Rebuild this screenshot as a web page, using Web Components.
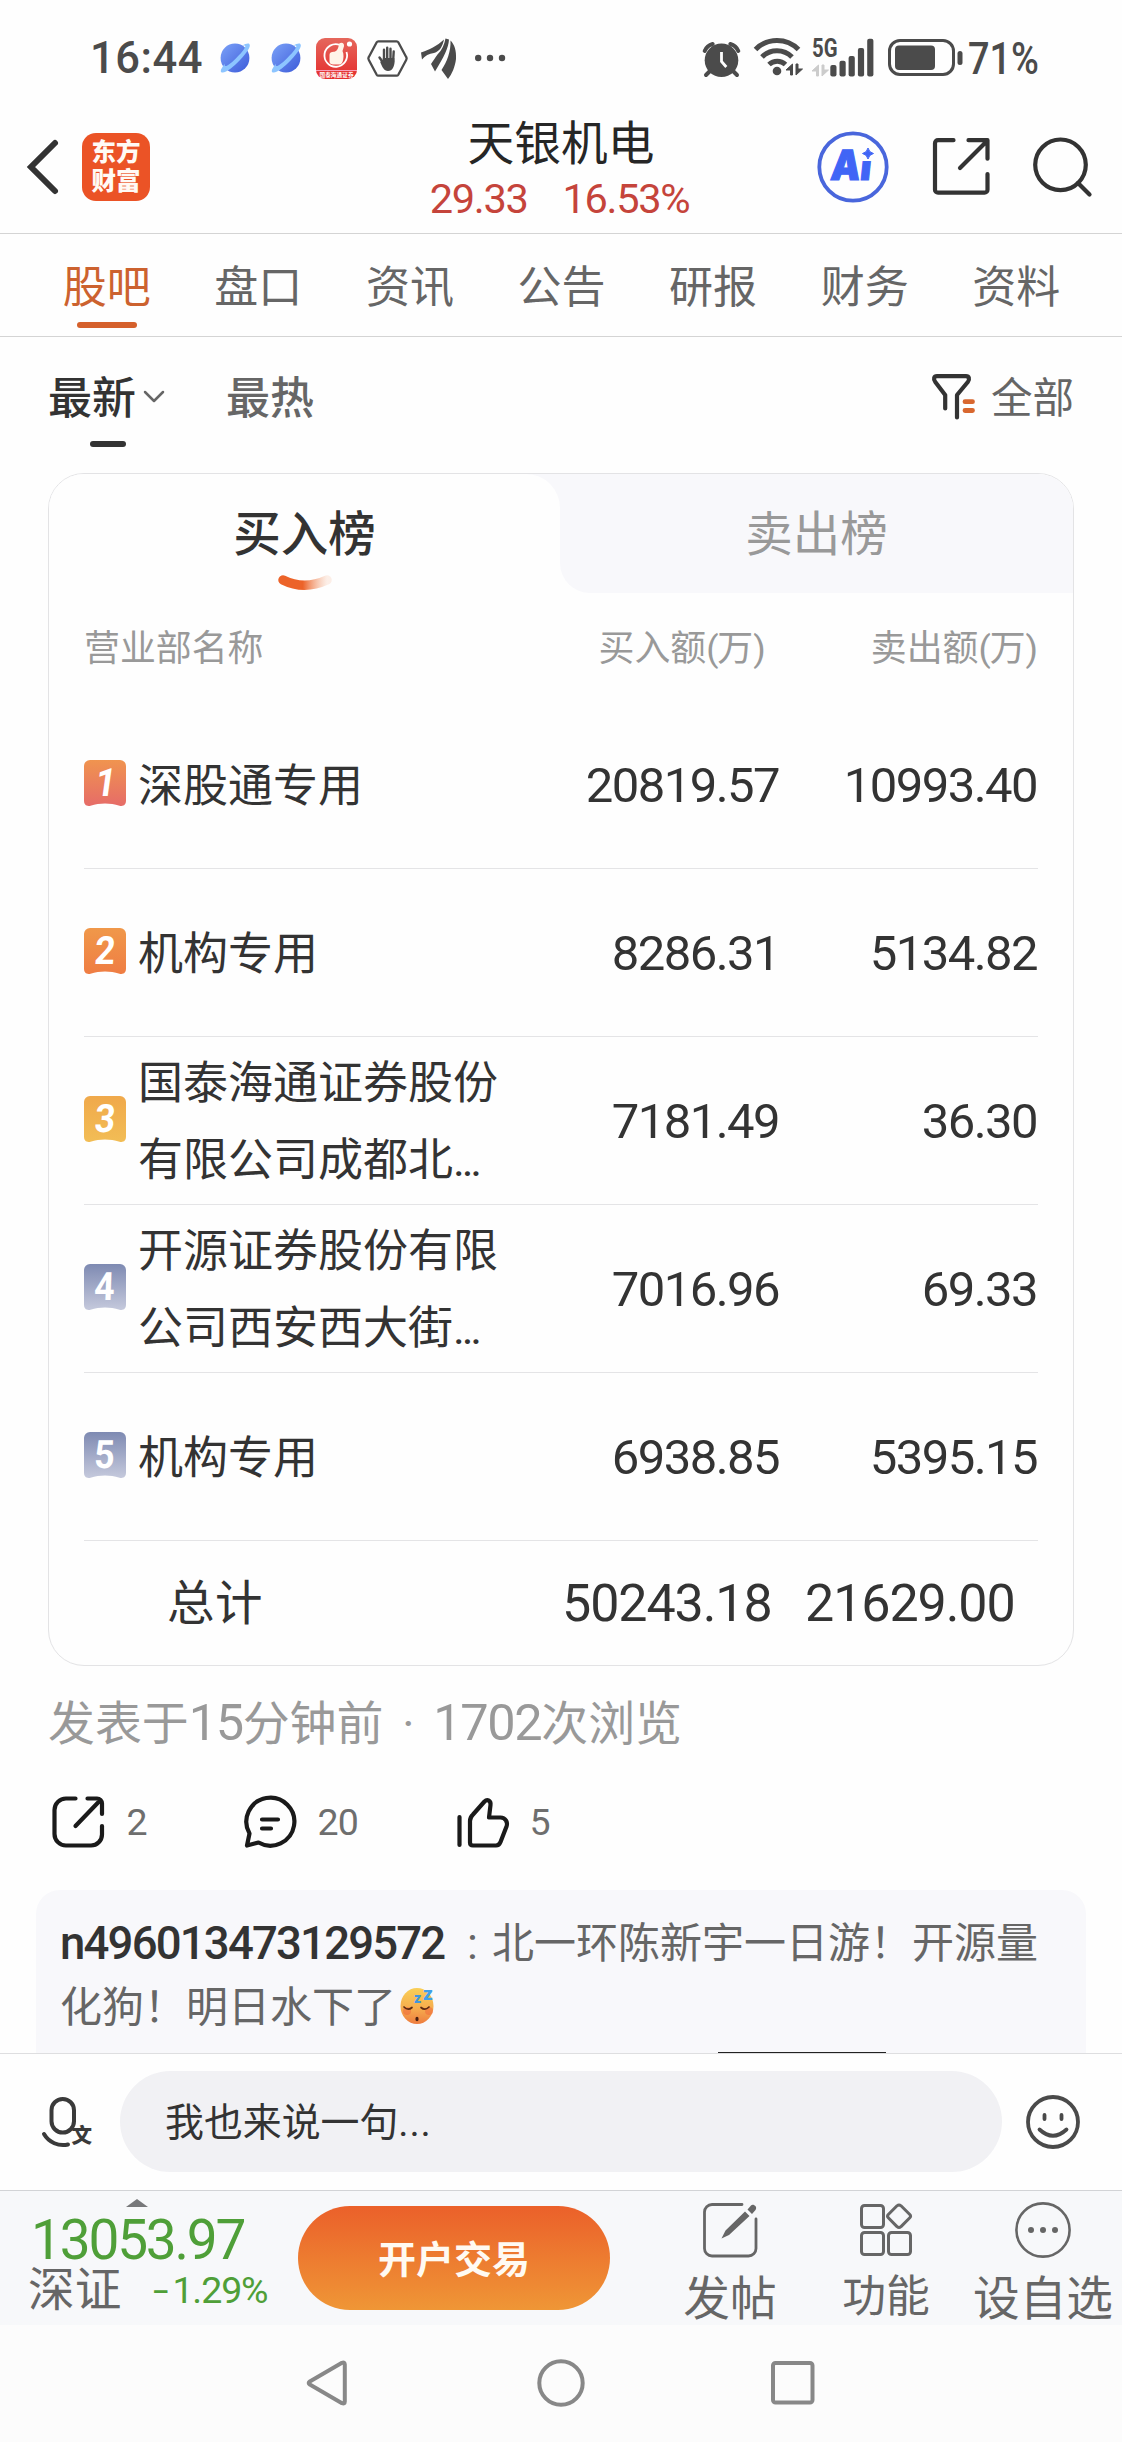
<!DOCTYPE html>
<html lang="zh-CN">
<head>
<meta charset="utf-8">
<title>天银机电</title>
<style>
html,body{margin:0;padding:0}
body{width:1122px;height:2442px;overflow:hidden;background:#fefefe;color:#333;font-family:Roboto,"Noto Sans CJK SC",sans-serif}
</style>
</head>
<body>
<stock-page></stock-page>
<script>
const BASE = `*{box-sizing:border-box}svg{display:block;flex:none;overflow:visible}span,div{white-space:nowrap}`;
function element(name, css, html) {
  customElements.define(name, class extends HTMLElement {
    connectedCallback() {
      if (this.shadowRoot) return;
      const root = this.attachShadow({ mode: 'open' });
      const t = document.createElement('template');
      const body = typeof html === 'function' ? html(this) : html;
      t.innerHTML = `<style>${BASE}${css}</style>${body}`;
      root.appendChild(t.content.cloneNode(true));
    }
  });
}

const planet = id => `<svg width="30" height="30" viewBox="0 0 30 30"><defs><linearGradient id="${id}" x1="0" y1="0" x2="1" y2="1"><stop offset="0" stop-color="#7ba2f8"/><stop offset="1" stop-color="#3d5bd9"/></linearGradient></defs><circle cx="15" cy="15" r="14.4" fill="url(#${id})"/><path d="M5 20.500C1.500 25 0 28 1.300 29.200c3 2 12-5 18.500-12C27 9.500 31.500 2.800 29.300.9 28.200 0 25.500.7 22 2.700c2.500-.6 3.500-.2 3.300.8-.5 2.500-5 7.500-9.500 12S6.500 23.700 5.200 23c-.7-.4-.7-1.300-.2-2.500z" fill="#8dc5ff"/></svg>`;

/* Status bar */
element('status-bar', `:host{display:flex;height:116px;color:#4b4b4b;padding-left:90px}
.time{font-size:43.500px;font-weight:500;line-height:44px;letter-spacing:.5px;width:130px;margin-top:37px}`,
`<span class="time">16:44</span>
<div style="margin-top:43px">${planet('p1')}</div>
<div style="margin:43px 0 0 21px">${planet('p2')}</div>
<svg style="margin:38px 0 0 15px" width="41" height="41" viewBox="0 0 41 41"><defs><linearGradient id="r" x1="0" y1="0" x2="0" y2="1"><stop offset="0" stop-color="#e5675c"/><stop offset="1" stop-color="#e52c2c"/></linearGradient></defs><rect width="41" height="41" rx="9" fill="url(#r)"/><path d="M0 32.500h41" stroke="#fbd" stroke-width=".8"/><path d="M24 7a11.300 11.300 0 1 0 6.500 7" fill="none" stroke="#fff" stroke-width="1.800"/><path d="M13.500 17c0-2.500 2-3.500 5-3.300 3-1 4-4 4.500-8 2.500-2 5.500-1 5 2.500L26.500 13c1.500 3 1.200 8 0 11-.8 2-2 2.500-3.500 2.500h-6c-2 0-3.500-1-3.500-3z" fill="#fff4e8"/><circle cx="33.500" cy="6" r="2.600" fill="#fff"/><text x="3.500" y="38.500" font-size="5.600" font-weight="700" fill="#fff" textLength="34">国泰海通证券</text></svg>
<svg style="margin:40px 0 0 10px" width="41" height="37" viewBox="0 0 41 37"><path d="M11.500 1.300h18a2 2 0 0 1 1.800 1l8 14.900a2.500 2.500 0 0 1 0 2.500l-8 15a2 2 0 0 1-1.800 1h-18a2 2 0 0 1-1.800-1l-8-15a2.500 2.500 0 0 1 0-2.500l8-14.900a2 2 0 0 1 1.800-1z" fill="none" stroke="#4b4b4b" stroke-width="2.300"/><path d="M17 9.800V20M20.200 7.800V20M23.500 8.800V20M26.700 11.500l-.6 10M12.500 17.500l3.500 5" stroke="#4b4b4b" stroke-width="2.400" stroke-linecap="round"/><path d="M15.800 18h11.500l.3 4c-.3 4-1.800 9-6.600 9-4 0-5.800-4-8-9.500l3 .5z" fill="#4b4b4b"/></svg>
<svg style="margin:38px 0 0 13px" width="36" height="41" viewBox="0 0 36 41" fill="#4b4b4b"><path d="M0 14.500C8 12 16 8 23 1.500c-1.500 7-4 11.500-10 13.500-5 .8-9 2.500-12 6.500z"/><path d="M24.500 .5l3.500 1C27.500 10 23 19 14 33.500L10 26c2-3 4-6 6.500-9.500C21 12 23.500 6 24.500.5z"/><path d="M29.500 2.500c4 4 6 10 5.500 18.500-1 8-4 15-8 20l-6.500-9C26 24 30 13 29.500 2.500z"/></svg>
<svg style="margin:54px 0 0 18px" width="30" height="8" fill="#4b4b4b"><circle cx="3.200" cy="4" r="3.200"/><circle cx="15" cy="4" r="3.200"/><circle cx="27" cy="4" r="3.200"/></svg>
<svg style="margin:42px 0 0 198px" width="37" height="35" viewBox="0 0 37 35"><circle cx="18.500" cy="18.300" r="16.800" fill="#4b4b4b"/><path d="M1.700 9a12 12 0 0 1 8-7M35.300 9a12 12 0 0 0-8-7M7 29l-4 4M30 29l4 4" stroke="#4b4b4b" stroke-width="4" stroke-linecap="round" fill="none"/><path d="M18.500 10v9.500l4.800 5.500" stroke="#fefefe" stroke-width="2.800" fill="none"/></svg>
<svg style="margin:38px 0 0 14px" width="49" height="38" viewBox="0 0 49 38"><g fill="none" stroke="#4b4b4b" stroke-width="5"><path d="M1.500 11.500a30 30 0 0 1 43 0"/><path d="M8 19a21 21 0 0 1 30 0"/><path d="M15 26.500a12 12 0 0 1 16.500 0"/></g><circle cx="23" cy="33" r="4.300" fill="#4b4b4b"/><path d="M38.500 26v11h-2v-5h-4.500zM42 37V26h2v5h4.500z" fill="#4b4b4b" stroke="#4b4b4b" stroke-width="1"/></svg>
<svg style="margin:38px 0 0 9px" width="62" height="39" viewBox="0 0 62 39"><text x="0" y="19" font-size="25" font-weight="700" fill="#4b4b4b" textLength="25.500" lengthAdjust="spacingAndGlyphs">5G</text><path d="M6.500 27v11h-2v-5H0zM10 38V27h2v5h4.500z" fill="#ccc" stroke="#ccc"/><g fill="#4b4b4b"><rect x="18.300" y="27" width="6.200" height="11.500" rx="2"/><rect x="27.500" y="22.700" width="6.200" height="15.800" rx="2"/><rect x="36.600" y="18" width="6.200" height="20.500" rx="2"/><rect x="45.900" y="10" width="6.200" height="28.500" rx="2"/><rect x="55.200" y=".7" width="6.200" height="37.800" rx="2"/></g></svg>
<svg style="margin:39px 0 0 14px" width="75" height="37" viewBox="0 0 75 37"><rect x="1.500" y="1.500" width="64" height="34" rx="10.500" fill="none" stroke="#4b4b4b" stroke-width="3"/><rect x="7" y="6.500" width="40" height="24.500" rx="4" fill="#4b4b4b"/><rect x="69.500" y="12" width="5" height="14" rx="2.500" fill="#4b4b4b"/></svg>
<svg style="margin:38px 0 0 5px" width="72" height="40"><text x="0" y="35.500" font-size="43.500" font-weight="500" fill="#4b4b4b" textLength="71" lengthAdjust="spacingAndGlyphs">71%</text></svg>`);

/* Title header */
element('quote-header', `:host{display:flex;height:118px;border-bottom:1px solid #d4d4d4}
.side{display:flex;width:360px;height:101px;align-items:center;flex:none}
.l{padding-left:27px}.r{padding:0 30px 0 55px;justify-content:space-between}
.logo{width:68px;height:68px;border-radius:14px;background:#eb5326;color:#fffaf5;font-weight:900;font-size:24.500px;line-height:29px;text-align:center;padding-top:5px;margin:1px 0 0 24px}
.mid{width:402px;text-align:center}
.name{font-size:46.700px;line-height:50px;color:#262626;margin-top:3px}
.num{display:flex;justify-content:center;gap:35px;font-size:41.500px;line-height:44px;color:#c5443b;letter-spacing:-1.300px;margin:8px 3px 0 0}`,
`<div class="side l"><svg width="31" height="54" viewBox="0 0 31 54"><path d="M28 3L4 27l24 24" fill="none" stroke="#333" stroke-width="6" stroke-linecap="round"/></svg><div class="logo">东方<br>财富</div></div>
<div class="mid"><div class="name">天银机电</div><div class="num"><span>29.33</span><span>16.53%</span></div></div>
<div class="side r">
<svg width="72" height="72" viewBox="0 0 72 72"><circle cx="36" cy="36" r="33.700" fill="none" stroke="#4966dc" stroke-width="3.800"/><g transform="skewX(-6)"><text x="18" y="49.500" font-family="Inter" font-size="41.500" font-weight="900" fill="#4065f6" stroke="#4065f6" stroke-width="1.200" textLength="40.500" lengthAdjust="spacingAndGlyphs">Ai</text></g><path d="M43 14h16v16H43z" fill="#fefefe"/><path d="M51 17q1 4.500 5.500 5.500-4.500 1-5.500 5.500-1-4.500-5.500-5.500 4.500-1 5.500-5.500z" fill="#4065f6" stroke="#4065f6"/></svg>
<svg width="57" height="57" viewBox="0 0 57 57" fill="none" stroke="#333" stroke-width="4.200" stroke-linecap="round" stroke-linejoin="round"><path d="M20.500 2.200H5a3 3 0 0 0-3 3v46.500a3 3 0 0 0 3 3h46.500a3 3 0 0 0 3-3V36M35.500 2.200h19v18.500M54 3L27 30"/></svg>
<svg width="59" height="59" viewBox="0 0 59 59" fill="none" stroke="#333" stroke-width="4.200" stroke-linecap="round"><circle cx="27.500" cy="27.800" r="25.300"/><path d="M45 46l11.500 11.500"/></svg></div>`);

/* Section tabs */
element('tab-strip', `:host{display:flex;height:103px;padding:0 30px 0 31px;border-bottom:1px solid #d4d4d4}`, `<slot></slot>`);
element('tab-item', `:host{display:flex;flex-direction:column;align-items:center;flex:1;font-size:44px;color:#666}
:host([on]){color:#cc622f}
span{line-height:60px;margin-top:24px}
i{display:none;width:60px;height:6px;border-radius:3px;background:#d5602b;margin-top:4px}
:host([on]) i{display:block}`, `<span><slot></slot></span><i></i>`);

/* Sort and filter */
element('filter-row', `:host{display:flex;height:136px;padding:31px 48px 0 48px;font-size:44px;font-weight:500;line-height:62px}
.on{width:89px;display:flex;flex-direction:column;align-items:center}
.on span{align-self:flex-start}
.on i{width:36px;height:6px;border-radius:3px;background:#333;margin:11px 0 0 30px}
.hot{color:#666;margin-left:61px}
.all{margin-left:16px;color:#666;font-size:41.500px;font-weight:400}`,
`<div class="on"><span>最新</span><i></i></div>
<svg style="margin:21px 0 0 6px" width="22" height="14" fill="none" stroke="#666" stroke-width="2.500" stroke-linecap="round" stroke-linejoin="round"><path d="M2 3l9 9 9-9"/></svg>
<span class="hot">最热</span>
<svg style="margin:6px 0 0 auto" width="43" height="46" viewBox="0 0 43 46" fill="none" stroke-linecap="round" stroke-linejoin="round"><path d="M13.200 34.500V21L3.300 8C1 5 2 2.200 5 2.200h29c3 0 4 2.800 1.800 5.800L25 21v22.500" stroke="#333" stroke-width="4.200"/><path d="M33 27.700h7.500M33 36.500h7.500" stroke="#d8672f" stroke-width="4.800"/></svg>
<span class="all">全部</span>`);

/* Ranking card */
element('rank-card', `:host{display:block;margin:0 48px;height:1193px;border:1px solid #e3e3e5;border-radius:36px;overflow:hidden}
.head{display:flex;height:119px;line-height:122px;font-size:47.500px;text-align:center}
.a{width:511px;background:#f8f8fb}.b{flex:1;background:#fefefe}
.a>div{height:119px;background:#fefefe;border-top-right-radius:34px;display:flex;flex-direction:column;align-items:center;font-weight:500}
.a svg{margin-top:-21px}
.b>div{height:119px;background:#f8f8fb;border-bottom-left-radius:30px;color:#999}
.cols{display:flex;height:108px;padding:0 36px 0 35px;font-size:35.900px;line-height:113px;color:#999}
.cols span:nth-child(1){width:512px}
.p{font-weight:400;letter-spacing:-1.100px}
.rows{padding:0 35px}
.sum{display:flex;line-height:126px;padding-left:118px;font-size:52px;letter-spacing:-1.080px}
.sum span:first-child{font-size:47.500px;letter-spacing:.5px;width:395px}
.sum span:nth-child(2){width:243px}`,
`<div class="head"><div class="a"><div><span>买入榜</span><svg width="54" height="16" viewBox="0 0 54 16"><defs><linearGradient id="s"><stop offset=".45" stop-color="#ec6329"/><stop offset="1" stop-color="#f4b08c" stop-opacity=".2"/></linearGradient></defs><path d="M5 5q21 10.500 44 0" fill="none" stroke="url(#s)" stroke-width="9.500" stroke-linecap="round"/></svg></div></div><div class="b"><div>卖出榜</div></div></div>
<div class="cols"><span>营业部名称</span><span style="padding-left:2.500px">买入额<b class="p">(</b>万<b class="p">)</b></span><span style="margin-left:auto">卖出额<b class="p">(</b>万<b class="p">)</b></span></div>
<div class="rows"><slot></slot></div>
<div class="sum"><span>总计</span><span>50243.18</span><span>21629.00</span></div>`);

const TONES = { 1: ['#f0944f', '#e66c68'], 2: ['#f0984a', '#ef7d43'], 3: ['#f0a94b', '#f2bd55'], 4: ['#7e8ab2', '#c5c9dc'], 5: ['#7e8ab2', '#c5c9dc'] };
element('rank-row', `:host{display:flex;align-items:center;height:168px;border-bottom:1px solid #e4e4e6;font-size:45px}
.name{width:375px;line-height:77px;margin:3px 0 0 12px}
.name ::slotted(small){font-size:inherit;letter-spacing:-3.200px}
.v{font-size:49px;letter-spacing:-1.550px;line-height:60px;text-align:right;margin-top:2px}
.b{width:266px}.s{flex:1;padding-right:1px}`, el => {
  const n = el.getAttribute('rank'), [c1, c2] = TONES[n], k = n == 1 ? -8 : n < 4 ? -5 : -2;
  return `<svg width="42" height="46" viewBox="0 0 42 46" style="margin-top:-3px"><defs><linearGradient id="g" x1="0" y1="0" x2="0" y2="1"><stop offset="0" stop-color="${c1}"/><stop offset="1" stop-color="${c2}"/></linearGradient></defs><path d="M6 0h30a6 6 0 0 1 6 6v34.500c0 4.500-2.500 6-6.500 5.200C26 42.600 16 42.600 6.500 45.700 2.500 46.500 0 45 0 40.500V6a6 6 0 0 1 6-6z" fill="url(#g)"/><text transform="translate(20 36) skewX(${k})" text-anchor="middle" font-size="39" font-weight="700" fill="#fff" textLength="20.500" lengthAdjust="spacingAndGlyphs">${n}</text></svg>
<div class="name"><slot></slot></div><span class="v b">${el.getAttribute('buy')}</span><span class="v s">${el.getAttribute('sell')}</span>`;
});

/* Post info and actions */
element('post-meta', `:host{display:block;padding-left:48px;height:112px;font-size:46.900px;line-height:113px;color:#999}
b{font-weight:400;font-size:50.500px;letter-spacing:-1.400px}i{font-style:normal;display:inline-block;width:50px;text-align:center}`,
`<div>发表于<b>15</b>分钟前<i>·</i><b>1702</b>次浏览</div>`);
element('post-actions', `:host{display:flex;height:112px;padding:17px 0 0 51.500px;font-size:37.500px;line-height:54px;color:#6e6e6e;letter-spacing:-.9px}
svg{fill:none;stroke:#1a1a1a;stroke-width:4.200;stroke-linecap:round;stroke-linejoin:round}`,
`<svg width="53" height="52" viewBox="0 0 53 52"><path d="M23.500 3.500H14a11.500 11.500 0 0 0-11.500 11.500v24A11.500 11.500 0 0 0 14 50.500h25a11 11 0 0 0 11-11V31M35.500 3.500H45a5 5 0 0 1 5 5V19M48.500 5L23.500 31"/></svg><span style="width:116px;padding-left:22px">2</span>
<svg style="margin-left:22px" width="53" height="52" viewBox="0 0 53 52"><path d="M4 50.500l2.500-12A24 24 0 1 1 15.500 47.500zM19 24.500h16M19 33.500h9"/></svg><span style="width:116px;padding-left:22px">20</span>
<svg style="margin-left:45px" width="53" height="52" viewBox="0 0 53 52"><path d="M2.500 22v28M13 47.500V26c0-3 1-4.500 3-6.500L27.500 6.500c3-3 6.500-.5 6 3.500l-1.500 12.500h11.500c5 0 7.500 4.500 6 9L43.500 47c-1 2.500-2 3.500-4.500 3.500H16c-2 0-3-1-3-3z"/></svg><span style="padding-left:20px">5</span>`);

/* Comment preview */
element('comment-preview', `:host{display:flex;flex-direction:column;height:163px;margin:0 36px;padding:22px 0 0 24px;background:#f8f8fb;border-radius:24px 24px 0 0;font-size:42px;line-height:64px;color:#666}
.l1,.l2{display:flex}
b{font-weight:500;font-size:45.500px;letter-spacing:-1.800px;color:#333;width:407px}
.c{width:25px;font-size:45px}
i{width:168px;height:1px;background:#222;margin:auto 0 0 658px;flex:none}`,
`<div class="l1"><b>n496013473129572</b><span class="c">:</span><span>北一环陈新宇一日游！开源量</span></div>
<div class="l2"><span>化狗！明日水下了</span><svg style="margin:11px 0 0 4px" width="34" height="37" viewBox="0 0 34 37"><defs><linearGradient id="e" x1="0" y1="0" x2="0" y2="1"><stop offset="0" stop-color="#f9cf58"/><stop offset=".55" stop-color="#f6ae4e"/><stop offset="1" stop-color="#ee7c3f"/></linearGradient></defs><ellipse cx="17" cy="19" rx="16.500" ry="18" fill="url(#e)"/><circle cx="7" cy="24" r="4" fill="#f0643c" opacity=".5"/><circle cx="29" cy="24" r="4" fill="#f0643c" opacity=".5"/><path d="M4 20q4 4 8 .5M21 20.500q4 3.500 8-.5" fill="none" stroke="#5b2a13" stroke-width="1.700" stroke-linecap="round"/><ellipse cx="17" cy="32" rx="1.600" ry="2.200" fill="#4a1f10"/><text x="14" y="16" font-size="14" font-weight="900" fill="#3f97dc">z</text><text x="23" y="12.500" font-size="19" font-weight="900" fill="#3fa0e8">z</text></svg></div><i></i>`);

/* Reply input */
element('reply-bar', `:host{display:flex;align-items:center;height:138px;border-top:1px solid #dedee0;border-bottom:1px solid #d2d3d6;padding:0 42px;background:#fefefe}
.box{width:882px;height:101px;border-radius:51px;background:#f1f1f4;margin:-1px 24px 0 29px;padding-left:45px;font-size:38.900px;line-height:104px;color:#333}`,
`<svg width="49" height="50" viewBox="0 0 49 50" fill="none" stroke="#3a3a3a" stroke-width="4" stroke-linecap="round"><rect x="9.500" y="2" width="22.500" height="33.500" rx="11.200"/><path d="M2 37a22 22 0 0 0 24 10.500"/><text x="29.500" y="46" font-size="20.500" font-weight="900" fill="#3a3a3a" stroke="none">文</text></svg>
<div class="box">我也来说一句<span style="letter-spacing:.8px">...</span></div>
<svg width="54" height="54" viewBox="0 0 54 54" fill="none" stroke="#4a4a4a" stroke-width="3.800" stroke-linecap="round"><circle cx="27" cy="27" r="25"/><path d="M18.500 20v4M35.500 20v4M13.500 34.500q13.500 12.500 27 0"/></svg>`);

/* Trading bar */
element('trade-bar', `:host{display:flex;height:134px;background:#f7f8fa}
.idx{width:298px;padding:8px 0 0 28px}
.v{font-size:55px;line-height:56px;letter-spacing:-2.200px;color:#4f9f38;margin:5px 0 0 3px}
.s{display:flex;line-height:46px;font-size:46.700px;color:#666;margin-top:-1px}
.p{font-size:37.500px;letter-spacing:-1.100px;color:#4f9f38;margin-left:32px}
.p i{font-style:normal;display:inline-block;width:19px;transform:scaleX(1.500);transform-origin:0 50%}
.btn{width:312px;height:104px;border-radius:52px;margin-top:15px;background:linear-gradient(#eb602a,#ef9636);color:#fffaf2;font-weight:700;font-size:38px;line-height:109px;text-align:center}
.it{display:flex;flex-direction:column;align-items:center;color:#666;font-size:46.700px;line-height:60px;padding-top:11px}
.it span{margin-top:11px}
.it svg{fill:none;stroke:#666;stroke-width:2.800;stroke-linecap:round;stroke-linejoin:round}`,
`<div class="idx"><svg style="margin-left:98px" width="22" height="8"><path d="M0 8L11 0l11 8z" fill="#77787a"/></svg><div class="v">13053.97</div><div class="s"><span>深证</span><span class="p"><i>-</i>1.29%</span></div></div>
<div class="btn">开户交易</div>
<div class="it" style="width:240px"><svg width="55" height="56" viewBox="0 0 55 56"><path d="M39 2.500H9a7.500 7.500 0 0 0-7.500 7.500v36.500A7.500 7.500 0 0 0 9 54h36.500a7.500 7.500 0 0 0 7.500-7.500V17"/><path d="M18.500 36.500l4-8L42 9.500l4.500 4.500L26 33zM44.500 7.500l3.500-4c2-2 7 1 4.500 4.500L49 12z" fill="#666" stroke="none"/></svg><span>发帖</span></div>
<div class="it" style="width:72px"><svg width="52" height="56" viewBox="0 0 52 56"><g stroke-width="3"><rect x="1.500" y="3.500" width="22" height="22" rx="3"/><rect x="1.500" y="30.500" width="22" height="22" rx="3"/><rect x="28.500" y="30.500" width="22" height="22" rx="3"/><path d="M37 3.800L28.300 12.500q-1.500 1.600 0 3.200L37 24.600q2 1.600 4 0l8.800-8.900q1.500-1.600 0-3.200L41 3.800q-2-1.600-4 0z"/></g></svg><span style="font-size:43.800px;margin-top:9px">功能</span></div>
<div class="it" style="width:158px;margin-left:42px"><svg width="56" height="56" viewBox="0 0 56 56"><circle cx="28" cy="28" r="26.600" stroke-width="2.600"/><g fill="#666" stroke="none"><circle cx="16" cy="28" r="3"/><circle cx="28" cy="28" r="3"/><circle cx="40" cy="28" r="3"/></g></svg><span>设自选</span></div>`);

/* System navigation */
element('nav-bar', `:host{display:flex;height:117px;background:#fcfcfc;padding:34px 307px 0 306px;justify-content:space-between}
svg{fill:none;stroke:#888;stroke-width:4}`,
`<svg width="42" height="48" viewBox="0 0 42 48" stroke-linejoin="round"><path d="M36 3.800L3.800 22.500q-2.200 1.500 0 3L36 44.200q2.800 1 2.800-1.700v-37q0-2.700-2.800-1.700z"/></svg>
<svg width="48" height="48"><circle cx="25" cy="24" r="21.700"/></svg>
<svg width="44" height="48"><rect x="2" y="4" width="39.500" height="39.500" rx="2.500"/></svg>`);

element('stock-page', `:host{display:flex;flex-direction:column;width:1122px;height:2442px}`,
`<status-bar></status-bar><quote-header></quote-header>
<tab-strip><tab-item on>股吧</tab-item><tab-item>盘口</tab-item><tab-item>资讯</tab-item><tab-item>公告</tab-item><tab-item>研报</tab-item><tab-item>财务</tab-item><tab-item>资料</tab-item></tab-strip>
<filter-row></filter-row>
<rank-card>
<rank-row rank="1" buy="20819.57" sell="10993.40">深股通专用</rank-row>
<rank-row rank="2" buy="8286.31" sell="5134.82">机构专用</rank-row>
<rank-row rank="3" buy="7181.49" sell="36.30">国泰海通证券股份<br>有限公司成都北<small>...</small></rank-row>
<rank-row rank="4" buy="7016.96" sell="69.33">开源证券股份有限<br>公司西安西大街<small>...</small></rank-row>
<rank-row rank="5" buy="6938.85" sell="5395.15">机构专用</rank-row>
</rank-card>
<post-meta></post-meta><post-actions></post-actions><comment-preview></comment-preview>
<reply-bar></reply-bar><trade-bar></trade-bar><nav-bar></nav-bar>`);
</script>
</body>
</html>
